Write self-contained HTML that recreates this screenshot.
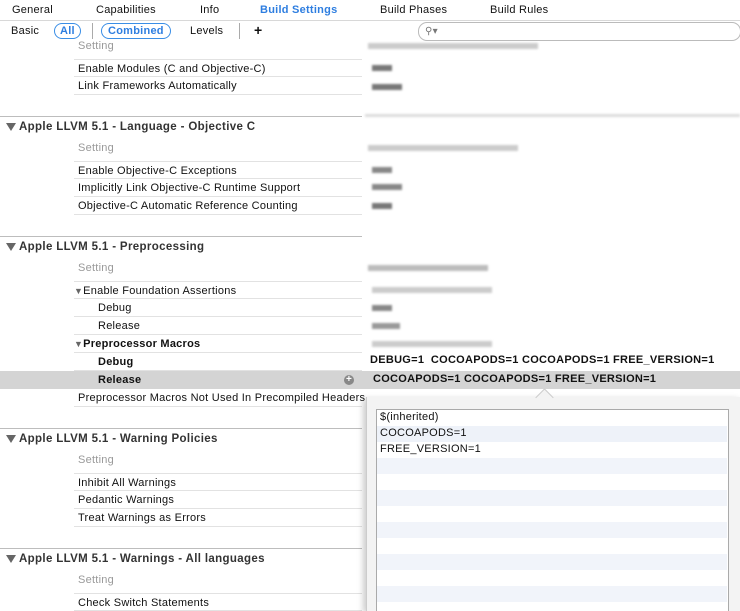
<!DOCTYPE html>
<html><head><style>
html,body{margin:0;width:740px;height:611px;overflow:hidden}
body{background:#fff;font-family:"Liberation Sans",sans-serif;font-size:11px;letter-spacing:0.25px;color:#111;position:relative}
.a{position:absolute;white-space:nowrap}
.r{position:absolute;left:74px;width:288px;height:18px;border-bottom:1px solid #e2e2e2;line-height:19px;padding-left:4px;box-sizing:border-box;white-space:nowrap}
.g{color:#999}
.sep{position:absolute;left:0;width:362px;height:1px;background:#bdbdbd}
.h{position:absolute;left:6px;font-weight:bold;color:#333;font-size:11.5px;letter-spacing:0.35px;white-space:nowrap}
.h:before{content:"";display:inline-block;border-left:5px solid transparent;border-right:5px solid transparent;border-top:8px solid #666;margin-right:3px;vertical-align:-1px}
.b{position:absolute;height:6px;background:#aaa;filter:blur(1px)}
.st{position:absolute;left:377px;width:350px;height:16px}
</style></head><body>
<div class="a" style="left:0;top:0;width:740px;height:20px;border-bottom:1px solid #d8d8d8"></div>
<div class="a" style="left:12px;top:4px">General</div>
<div class="a" style="left:96px;top:4px">Capabilities</div>
<div class="a" style="left:200px;top:4px">Info</div>
<div class="a" style="left:260px;top:4px;color:#2e7ee0;font-weight:bold">Build Settings</div>
<div class="a" style="left:380px;top:4px">Build Phases</div>
<div class="a" style="left:490px;top:4px">Build Rules</div>
<div class="a" style="left:11px;top:25px">Basic</div>
<div class="a" style="left:54px;top:23px;border:1px solid #3a8ee6;border-radius:9px;padding:1px 5px;color:#2e7ee0;font-weight:bold">All</div>
<div class="a" style="left:92px;top:23px;width:1px;height:16px;background:#aaa"></div>
<div class="a" style="left:101px;top:23px;border:1px solid #3a8ee6;border-radius:9px;padding:1px 6px;color:#2e7ee0;font-weight:bold">Combined</div>
<div class="a" style="left:190px;top:25px">Levels</div>
<div class="a" style="left:239px;top:23px;width:1px;height:16px;background:#aaa"></div>
<div class="a" style="left:254px;top:22px;font-size:14px;font-weight:bold">+</div>
<div class="a" style="left:418px;top:22px;width:315px;height:17px;border:1px solid #bbb;border-radius:9px;color:#777;font-size:10px;line-height:17px;padding-left:6px">&#9906;&#9662;</div>

<div class="r g" style="top:37px;border:none">Setting</div>
<div class="r" style="top:59px;border-top:1px solid #e2e2e2">Enable Modules (C and Objective-C)</div>
<div class="r" style="top:77px">Link Frameworks Automatically</div>
<div class="sep" style="top:116px"></div>
<div class="h" style="top:121px">Apple LLVM 5.1 - Language - Objective C</div>
<div class="r g" style="top:139px;border:none">Setting</div>
<div class="r" style="top:161px;border-top:1px solid #e2e2e2">Enable Objective-C Exceptions</div>
<div class="r" style="top:179px">Implicitly Link Objective-C Runtime Support</div>
<div class="r" style="top:197px">Objective-C Automatic Reference Counting</div>
<div class="sep" style="top:236px"></div>
<div class="h" style="top:241px">Apple LLVM 5.1 - Preprocessing</div>
<div class="r g" style="top:259px;border:none">Setting</div>
<div class="r" style="top:281px;border-top:1px solid #e2e2e2;padding-left:0"><span style="color:#666;font-size:9px">&#9660;</span>Enable Foundation Assertions</div>
<div class="r" style="top:299px;padding-left:24px">Debug</div>
<div class="r" style="top:317px;padding-left:24px">Release</div>
<div class="r" style="top:335px;padding-left:0;font-weight:bold"><span style="color:#666;font-size:9px;font-weight:normal">&#9660;</span>Preprocessor Macros</div>
<div class="r" style="top:353px;padding-left:24px;font-weight:bold">Debug</div>
<div class="a" style="left:0;top:371px;width:740px;height:18px;background:#d4d4d4"></div>
<div class="r" style="top:371px;padding-left:24px;font-weight:bold;border:none">Release</div>
<div class="a" style="left:344px;top:375px;width:10px;height:10px;border-radius:50%;background:#888;color:#fff;font-size:10px;line-height:10px;text-align:center;font-weight:bold">+</div>
<div class="a" style="left:370px;top:354px;font-weight:bold;letter-spacing:0.28px">DEBUG=1&nbsp; COCOAPODS=1 COCOAPODS=1 FREE_VERSION=1</div>
<div class="a" style="left:373px;top:373px;font-weight:bold;letter-spacing:0.27px">COCOAPODS=1 COCOAPODS=1 FREE_VERSION=1</div>
<div class="r" style="top:389px">Preprocessor Macros Not Used In Precompiled Headers</div>
<div class="sep" style="top:428px"></div>
<div class="h" style="top:433px">Apple LLVM 5.1 - Warning Policies</div>
<div class="r g" style="top:451px;border:none">Setting</div>
<div class="r" style="top:473px;border-top:1px solid #e2e2e2">Inhibit All Warnings</div>
<div class="r" style="top:491px">Pedantic Warnings</div>
<div class="r" style="top:509px">Treat Warnings as Errors</div>
<div class="sep" style="top:548px"></div>
<div class="h" style="top:553px">Apple LLVM 5.1 - Warnings - All languages</div>
<div class="r g" style="top:571px;border:none">Setting</div>
<div class="r" style="top:593px;border-top:1px solid #e2e2e2">Check Switch Statements</div>

<div class="b" style="left:368px;top:43px;width:170px;background:#ccc"></div>
<div class="b" style="left:372px;top:65px;width:20px;background:#777"></div>
<div class="b" style="left:372px;top:84px;width:30px;background:#777"></div>
<div class="b" style="left:365px;top:114px;width:375px;height:3px;background:#ddd"></div>
<div class="b" style="left:368px;top:145px;width:150px;background:#ccc"></div>
<div class="b" style="left:372px;top:167px;width:20px;background:#888"></div>
<div class="b" style="left:372px;top:184px;width:30px;background:#888"></div>
<div class="b" style="left:372px;top:203px;width:20px;background:#777"></div>
<div class="b" style="left:368px;top:265px;width:120px;background:#bbb"></div>
<div class="b" style="left:372px;top:287px;width:120px;background:#ccc"></div>
<div class="b" style="left:372px;top:305px;width:20px;background:#888"></div>
<div class="b" style="left:372px;top:323px;width:28px;background:#999"></div>
<div class="b" style="left:372px;top:341px;width:120px;background:#ccc"></div>

<div class="a" style="left:366px;top:397px;width:374px;height:214px;background:#f3f3f3;border-left:1px solid #ccc;box-shadow:-3px 2px 6px rgba(0,0,0,.2)"></div>
<div class="a" style="left:538px;top:391px;width:12px;height:12px;background:#f3f3f3;transform:rotate(45deg);border-left:1px solid #ccc;border-top:1px solid #ccc"></div>
<div class="a" style="left:376px;top:409px;width:351px;height:202px;background:#fff;border:1px solid #aaa;border-bottom:none"></div>
<div class="st" style="top:426px;background:#eef2f9"></div>
<div class="st" style="top:458px;background:#f1f4fa"></div>
<div class="st" style="top:490px;background:#f1f4fa"></div>
<div class="st" style="top:522px;background:#f1f4fa"></div>
<div class="st" style="top:554px;background:#f1f4fa"></div>
<div class="st" style="top:586px;background:#f1f4fa"></div>
<div class="a" style="left:380px;top:411px">$(inherited)</div>
<div class="a" style="left:380px;top:427px">COCOAPODS=1</div>
<div class="a" style="left:380px;top:443px">FREE_VERSION=1</div>
</body></html>
